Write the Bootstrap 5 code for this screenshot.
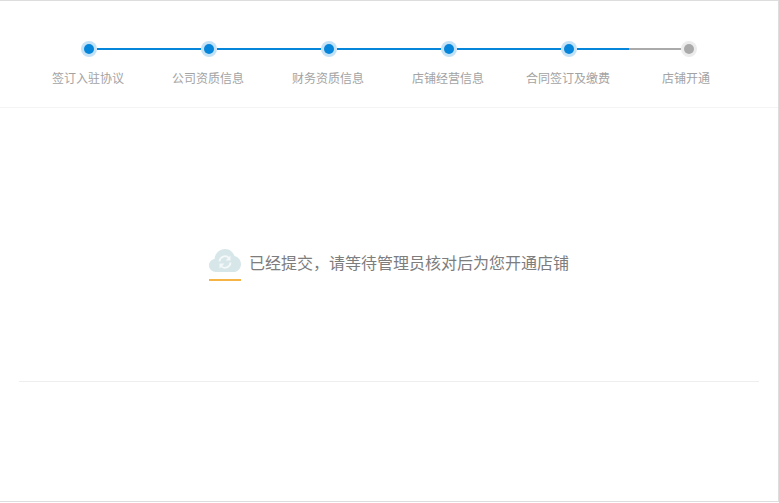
<!DOCTYPE html>
<html lang="zh">
<head>
<meta charset="utf-8">
<title>店铺开通</title>
<link href="https://cdn.jsdelivr.net/npm/bootstrap@5.3.0/dist/css/bootstrap.min.css" rel="stylesheet">
<style>
html, body { height: 100%; background: #fff; }
body { font-family: "Liberation Sans", "Noto Sans CJK SC", sans-serif; }
.shop-frame { height: 502px; border: 1px solid #ddd; border-left: 0; }
.step-head { height: 107px; padding: 40px 29px 0; border-bottom: 1px solid #f4f4f4; }
.step-track { padding: 0 52px; height: 16px; }
.step-dot { width: 16px; height: 16px; flex: none; border-radius: 50%; background: #c4e2f6; display: flex; align-items: center; justify-content: center; }
.step-dot::after { content: ""; width: 10px; height: 10px; border-radius: 50%; background: #0686da; }
.step-dot.is-todo { background: #ececec; }
.step-dot.is-todo::after { background: #aaa; }
.step-line { height: 2px; width: 104px; flex: none; background: #0686da; }
.step-line.half { width: 52px; }
.step-line.is-todo { background: #aaa; }
.step-labels { margin: 13px 0 0 -1px; }
.step-label { width: 120px; flex: none; text-align: center; font-size: 12px; line-height: 18px; color: #a3a3a3; }
.step-label:last-child { margin-left: -2px; }
.wait-zone { height: 273px; padding-top: 141px; }
.wait-icon { width: 32px; height: 32px; flex: none; border-bottom: 2px solid #f5b445; }
.wait-icon svg { display: block; }
.wait-text { font-size: 16px; line-height: 24px; color: #7d7d7d; margin: 3px 0 0 8px; }
.wait-rule { height: 1px; margin: 0 19px; background: #eee; }
</style>
</head>
<body class="m-0">
<div class="shop-frame">
  <div class="step-head">
    <div class="step-track d-flex align-items-center">
      <span class="step-dot"></span><span class="step-line"></span>
      <span class="step-dot"></span><span class="step-line"></span>
      <span class="step-dot"></span><span class="step-line"></span>
      <span class="step-dot"></span><span class="step-line"></span>
      <span class="step-dot"></span><span class="step-line half"></span><span class="step-line half is-todo"></span>
      <span class="step-dot is-todo"></span>
    </div>
    <div class="step-labels d-flex">
      <div class="step-label">签订入驻协议</div>
      <div class="step-label">公司资质信息</div>
      <div class="step-label">财务资质信息</div>
      <div class="step-label">店铺经营信息</div>
      <div class="step-label">合同签订及缴费</div>
      <div class="step-label">店铺开通</div>
    </div>
  </div>
  <div class="wait-zone d-flex justify-content-center align-items-start">
    <div class="wait-icon">
      <svg width="32" height="24" viewBox="0 0 32 24" aria-hidden="true">
        <path fill="#d7e6e9" d="M7 23C3 23 0 20 0 16.500C0 13 2.500 10.500 5.500 10C6 4.500 10.500 0 16 0C20.500 0 24 2.800 25.500 7C29.300 7.800 32 11.200 32 15.200C32 19.600 28.500 23 24.500 23Z"/>
        <path fill="none" stroke="#f4f8f9" stroke-width="1.800" d="M10.500 12.500A5.500 5.500 0 0 1 20 9M21.500 13.500A5.500 5.500 0 0 1 12 17"/>
        <path fill="#f4f8f9" d="M21.500 6.500V11.500H16.500ZM10.500 19.500V14.500H15.500Z"/>
      </svg>
    </div>
    <div class="wait-text">已经提交，请等待管理员核对后为您开通店铺</div>
  </div>
  <div class="wait-rule"></div>
</div>
<script src="https://cdn.jsdelivr.net/npm/bootstrap@5.3.0/dist/js/bootstrap.bundle.min.js"></script>
</body>
</html>
